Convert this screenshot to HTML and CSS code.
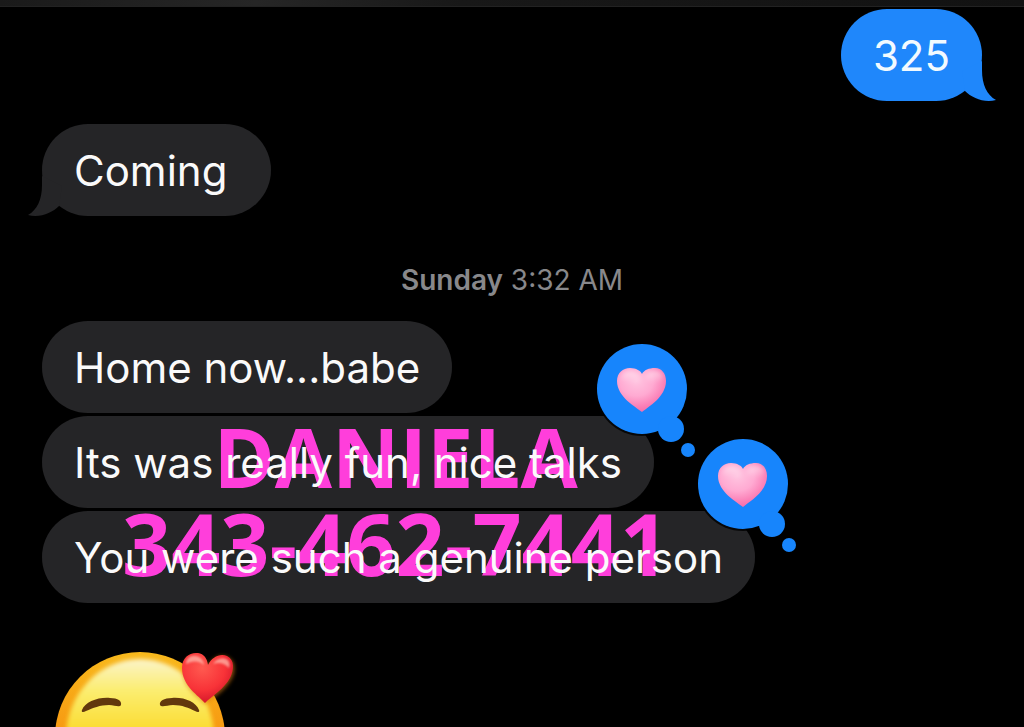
FILE: index.html
```html
<!DOCTYPE html>
<html lang="en">
<head>
<meta charset="utf-8">
<meta name="viewport" content="width=device-width, initial-scale=1">
<title>Messages</title>
<link rel="stylesheet" href="styles.css">
</head>
<body>
<svg class="defs" aria-hidden="true">
  <defs>
    <radialGradient id="pink" cx="0.4" cy="0.3" r="0.75">
      <stop offset="0" stop-color="#ffc4e0"/>
      <stop offset="0.45" stop-color="#ffaad2"/>
      <stop offset="0.75" stop-color="#fb82b8"/>
      <stop offset="1" stop-color="#f268a8"/>
    </radialGradient>
    <linearGradient id="pinkShine" x1="0" y1="0" x2="0" y2="1">
      <stop offset="0" stop-color="#fff" stop-opacity="0.5"/>
      <stop offset="1" stop-color="#fff" stop-opacity="0"/>
    </linearGradient>
    <filter id="soft" x="-30%" y="-30%" width="160%" height="160%"><feGaussianBlur stdDeviation="2"/></filter>
    <symbol id="reaction" viewBox="0 0 102 116">
      <circle cx="46" cy="46" r="47" fill="#000" fill-opacity="0.8"/>
      <circle cx="46" cy="46" r="45" fill="#1785fc"/>
      <circle cx="75" cy="86" r="13" fill="#1785fc"/>
      <circle cx="92" cy="107" r="7" fill="#1785fc"/>
      <path d="M46 69C40 64 21 54 21 38C21 30 27 25 34 25C40 25 45 28 46 31C48 27 53 25 59 25C66 25 70 31 70 38C70 54 52 64 46 69Z" fill="url(#pink)"/>
      <path d="M25 36C25 31 29 28 34 28C39 28 43 31 45 35C44 41 28 42 25 36ZM49 34C51 30 55 28 59 28C64 28 68 31 67 36C64 41 51 41 49 34Z" fill="url(#pinkShine)" filter="url(#soft)"/>
    </symbol>
  </defs>
</svg>
<header class="topbar"></header>
<main class="thread">
  <div class="row sent">
    <p class="bubble"><span class="text">325</span>
      <svg class="tail" viewBox="0 0 34 40" aria-hidden="true"><path d="M20 0V9C20 24 25 34 34 39C22 42 10 37 3 30L0 10Z"/></svg>
    </p>
  </div>
  <div class="row">
    <p class="bubble"><span class="text">Coming&nbsp;</span>
      <svg class="tail" viewBox="0 0 34 40" aria-hidden="true"><path d="M20 0V9C20 24 25 34 34 39C22 42 10 37 3 30L0 10Z"/></svg>
    </p>
  </div>
  <time class="stamp"><b>Sunday</b> 3:32 AM</time>
  <section class="group">
    <p class="bubble"><span class="text">Home now...babe</span></p>
    <p class="bubble"><span class="text">Its was really fun, nice talks</span>
      <svg class="reaction" role="img" aria-label="Pink heart"><use href="#reaction"/></svg>
    </p>
    <p class="bubble"><span class="text">You were such a genuine person</span>
      <svg class="reaction" role="img" aria-label="Pink heart"><use href="#reaction"/></svg>
    </p>
    <div class="overlay">DANIELA<br><span class="phone">343-462-7441</span></div>
  </section>
  <svg class="face" viewBox="0 0 190 180" role="img" aria-label="Smiling face with heart">
    <defs>
      <linearGradient id="rim" x1="0" y1="0" x2="0" y2="1">
        <stop offset="0" stop-color="#f8b91c"/><stop offset="0.45" stop-color="#f79a12"/><stop offset="1" stop-color="#f08010"/>
      </linearGradient>
      <linearGradient id="skin" x1="0" y1="0" x2="0" y2="1">
        <stop offset="0" stop-color="#fbf4c9"/><stop offset="0.2" stop-color="#fbed70"/><stop offset="0.45" stop-color="#fbdc32"/><stop offset="1" stop-color="#f9b51c"/>
      </linearGradient>
      <radialGradient id="red" cx="0.4" cy="0.3" r="0.8">
        <stop offset="0" stop-color="#ff5a50"/><stop offset="0.55" stop-color="#f83338"/><stop offset="1" stop-color="#c90d25"/>
      </radialGradient>
      <filter id="blurSkin"><feGaussianBlur stdDeviation="2"/></filter>
      <filter id="blurHeart" x="-20%" y="-20%" width="140%" height="140%"><feGaussianBlur stdDeviation="2"/></filter>
      <filter id="blurShine" x="-20%" y="-40%" width="140%" height="180%"><feGaussianBlur stdDeviation="1"/></filter>
    </defs>
    <circle cx="87" cy="87" r="85" fill="url(#rim)"/>
    <ellipse cx="87" cy="88" rx="74" ry="79" fill="url(#skin)" filter="url(#blurSkin)"/>
    <path d="M29 60C32 52 45 47 57 48C65 48 69 51 68 55C66 58 62 55 56 55C47 55 40 58 33 61C30 63 28 62 29 60Z" fill="#62380d"/>
    <path d="M146 60C143 52 131 47 119 48C111 48 106 51 107 55C109 58 114 55 120 55C129 55 136 58 142 61C145 63 147 62 146 60Z" fill="#62380d"/>
    <path d="M152 54C145 47 129 37 130 20C130 9 139 4 147 8C152 10 154 13 155 17C159 9 166 4 174 7C182 10 183 20 179 28C173 40 160 48 152 54Z" fill="#d87914" opacity="0.65" filter="url(#blurHeart)"/>
    <path d="M152 53C146 46 129 36 129 18C129 7 137 2 145 3C151 4 154 8 155 15C159 7 167 3 174 6C182 10 181 20 177 28C171 39 159 46 152 53Z" fill="url(#red)"/>
    <path d="M133 14C133 8 138 5 143 6C148 7 151 11 151 15C145 10 139 11 133 14ZM160 14C163 9 169 7 173 9C177 11 177 15 176 18C171 13 166 12 160 14Z" fill="#ffc0b2" opacity="0.7" filter="url(#blurShine)"/>
  </svg>
</main>
</body>
</html>
```
FILE: styles.css
```css
* { box-sizing: border-box; }
body {
  margin: 0;
  height: 100vh;
  overflow: hidden;
  background: #000;
  color: #fff;
  font-family: Inter, "Liberation Sans", sans-serif;
}
.defs { position: absolute; width: 0; height: 0; }
.topbar {
  height: 7px;
  background: linear-gradient(90deg, #1a1a1a, #262626 25%, #181818 45%, #121212);
  border-bottom: 1px solid #222;
}
.thread {
  display: flex;
  flex-direction: column;
  height: calc(100vh - 7px);
  overflow: hidden;
  padding: 2px 42px 0;
}
.thread > * { flex-shrink: 0; }
.row { display: flex; margin-bottom: 23px; }
.sent { justify-content: flex-end; }
.bubble {
  position: relative;
  margin: 0;
  padding: 20px 32px 18px;
  border-radius: 46px;
  background: #252527;
  color: #fafafa;
  font-size: 42px;
  line-height: 54px;
  white-space: nowrap;
}
.sent .bubble { background: #1f87fb; color: #f2faff; }
.text { position: relative; z-index: 2; }
.tail {
  position: absolute;
  right: -14px;
  bottom: 0;
  width: 34px;
  height: 40px;
  fill: #1f87fb;
}
.row:not(.sent) .tail {
  right: auto;
  left: -14px;
  fill: #252527;
  transform: scaleX(-1);
}
.stamp {
  margin: 23px 0;
  color: #88888b;
  font-size: 28px;
  line-height: 36px;
  text-align: center;
}
.stamp b { font-weight: 600; }
.group {
  position: relative;
  display: flex;
  flex-direction: column;
  align-items: flex-start;
  gap: 3px;
}
.reaction {
  position: absolute;
  z-index: 3;
  right: -44px;
  top: -73px;
  width: 102px;
  height: 116px;
  overflow: visible;
}
.overlay {
  position: absolute;
  z-index: 1;
  left: 80px;
  top: 91px;
  color: #ff3edb;
  font-family: "Open Sans", "Noto Sans", sans-serif;
  font-size: 83px;
  font-weight: 700;
  line-height: 87px;
  text-align: center;
  white-space: nowrap;
}
.phone { font-size: 86px; }
.face { width: 190px; height: 180px; margin: 47px 0 0 11px; }
```
